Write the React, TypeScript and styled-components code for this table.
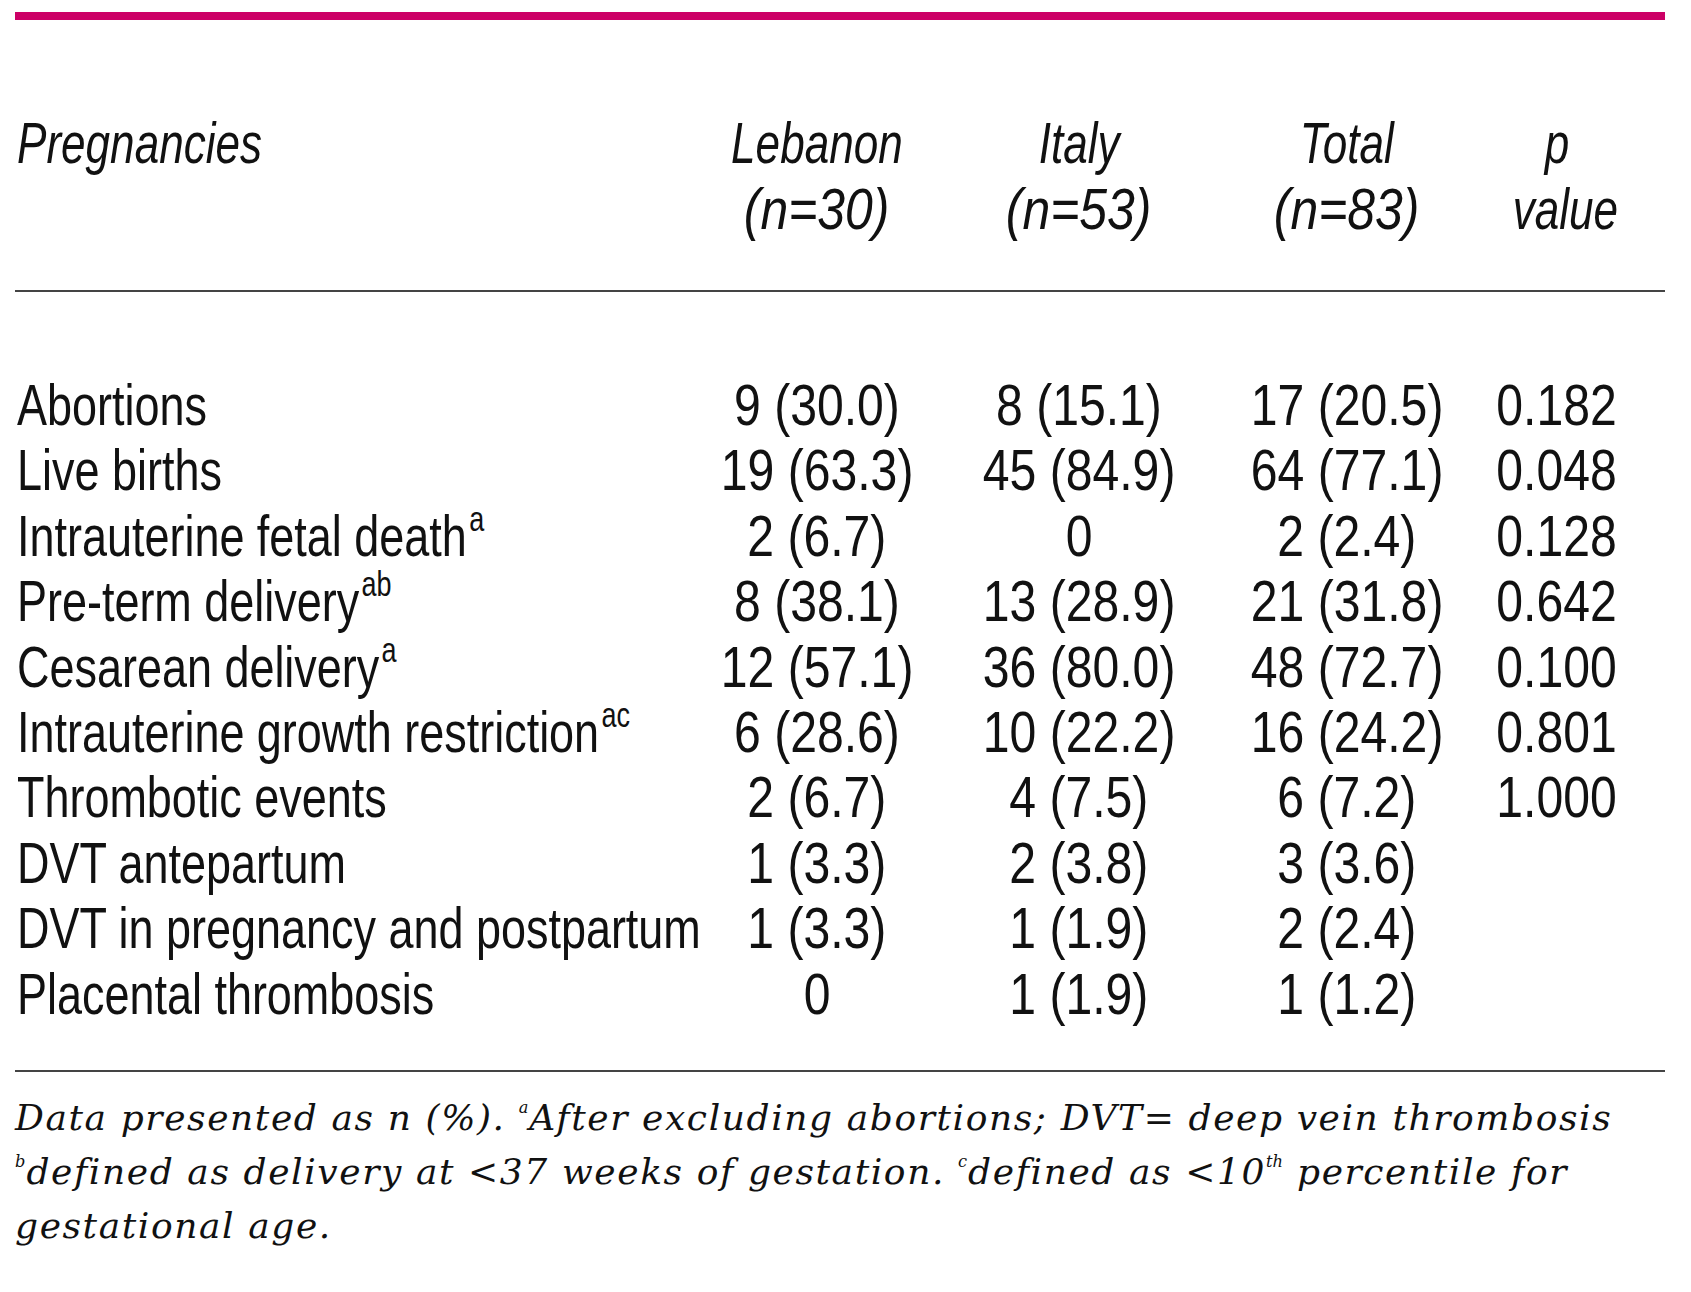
import React from "react";
import styled, { createGlobalStyle } from "styled-components";

const Global = createGlobalStyle`
  html, body { margin: 0; padding: 0; background: #ffffff; }
  body {
    font-family: "Liberation Sans", Arial, sans-serif;
    color: #111111;
  }
`;

const Page = styled.div`
  width: 1650px;
  padding: 12px 26px 40px 15px;
`;

const TopBar = styled.div`
  height: 8px;
  background: #cc0066;
`;

const Grid = styled.div`
  display: grid;
  grid-template-columns: 685px 234px 290px 246px 174px;
`;

const Head = styled(Grid)`
  padding: 90px 0 48px;
  border-bottom: 2px solid #444444;
  font-style: italic;
  font-size: 58px;
  line-height: 66px;
`;

const Body = styled.div`
  padding: 80px 0 44px;
  border-bottom: 2px solid #444444;
  font-size: 58px;
  line-height: 65.4px;
`;

const Row = styled(Grid)``;

const Cell = styled.div<{ $align?: "left" | "center" }>`
  text-align: ${(p) => p.$align ?? "center"};
  white-space: nowrap;
  padding-left: ${(p) => (p.$align === "left" ? "2px" : "0")};
`;

const HeadCell = styled(Cell)`
  display: flex;
  flex-direction: column;
  align-items: ${(p) => (p.$align === "left" ? "flex-start" : "center")};
`;

/* condensed face: the installed sans has no narrow cut */
const Squeeze = styled.span<{ $k: number; $left?: boolean; $dx?: number }>`
  display: inline-block;
  white-space: nowrap;
  transform: translateX(${(p) => p.$dx ?? 0}px) scaleX(${(p) => p.$k});
  transform-origin: ${(p) => (p.$left ? "left center" : "center center")};
`;

const Sup = styled.sup`
  font-size: 0.6em;
  line-height: 0;
  vertical-align: 0.72em;
  margin-left: 3px;
`;

const Note = styled.div`
  padding-top: 19px;
  font-family: "DejaVu Serif", "Liberation Serif", serif;
  font-style: italic;
  font-size: 36px;
  line-height: 54px;
  white-space: nowrap;
  letter-spacing: 1.6px;
`;

const NoteSup = styled.sup`
  font-size: 0.45em;
  line-height: 0;
  vertical-align: 1.05em;
  letter-spacing: 0;
  margin-right: 1px;
`;

type RowData = {
  label: string;
  sup?: string;
  values: [string, string, string, string];
};

const rows: RowData[] = [
  { label: "Abortions", values: ["9 (30.0)", "8 (15.1)", "17 (20.5)", "0.182"] },
  { label: "Live births", values: ["19 (63.3)", "45 (84.9)", "64 (77.1)", "0.048"] },
  { label: "Intrauterine fetal death", sup: "a", values: ["2 (6.7)", "0", "2 (2.4)", "0.128"] },
  { label: "Pre-term delivery", sup: "ab", values: ["8 (38.1)", "13 (28.9)", "21 (31.8)", "0.642"] },
  { label: "Cesarean delivery", sup: "a", values: ["12 (57.1)", "36 (80.0)", "48 (72.7)", "0.100"] },
  { label: "Intrauterine growth restriction", sup: "ac", values: ["6 (28.6)", "10 (22.2)", "16 (24.2)", "0.801"] },
  { label: "Thrombotic events", values: ["2 (6.7)", "4 (7.5)", "6 (7.2)", "1.000"] },
  { label: "DVT antepartum", values: ["1 (3.3)", "2 (3.8)", "3 (3.6)", ""] },
  { label: "DVT in pregnancy and postpartum", values: ["1 (3.3)", "1 (1.9)", "2 (2.4)", ""] },
  { label: "Placental thrombosis", values: ["0", "1 (1.9)", "1 (1.2)", ""] },
];

const heads: { top: string; bottom: string; k2: number; dx2: number }[] = [
  { top: "Lebanon", bottom: "(n=30)", k2: 0.86, dx2: 0 },
  { top: "Italy", bottom: "(n=53)", k2: 0.86, dx2: 0 },
  { top: "Total", bottom: "(n=83)", k2: 0.86, dx2: 0 },
  { top: "p", bottom: "value", k2: 0.76, dx2: 8 },
];

export default function App() {
  return (
    <>
      <Global />
      <Page>
        <TopBar />
        <Head>
          <HeadCell $align="left">
            <Squeeze $k={0.76} $left>
              Pregnancies
            </Squeeze>
          </HeadCell>
          {heads.map((h) => (
            <HeadCell key={h.top}>
              <Squeeze $k={0.76}>{h.top}</Squeeze>
              <Squeeze $k={h.k2} $dx={h.dx2}>
                {h.bottom}
              </Squeeze>
            </HeadCell>
          ))}
        </Head>
        <Body>
          {rows.map((r) => (
            <Row key={r.label}>
              <Cell $align="left">
                <Squeeze $k={0.775} $left>
                  {r.label}
                  {r.sup && <Sup>{r.sup}</Sup>}
                </Squeeze>
              </Cell>
              {r.values.map((v, i) => (
                <Cell key={i}>
                  <Squeeze $k={0.83}>{v}</Squeeze>
                </Cell>
              ))}
            </Row>
          ))}
        </Body>
        <Note>
          Data presented as n (%). <NoteSup>a</NoteSup>After excluding abortions; DVT= deep vein thrombosis
          <br />
          <NoteSup>b</NoteSup>defined as delivery at &lt;37 weeks of gestation. <NoteSup>c</NoteSup>defined as
          &lt;10<NoteSup>th</NoteSup> percentile for
          <br />
          gestational age.
        </Note>
      </Page>
    </>
  );
}
